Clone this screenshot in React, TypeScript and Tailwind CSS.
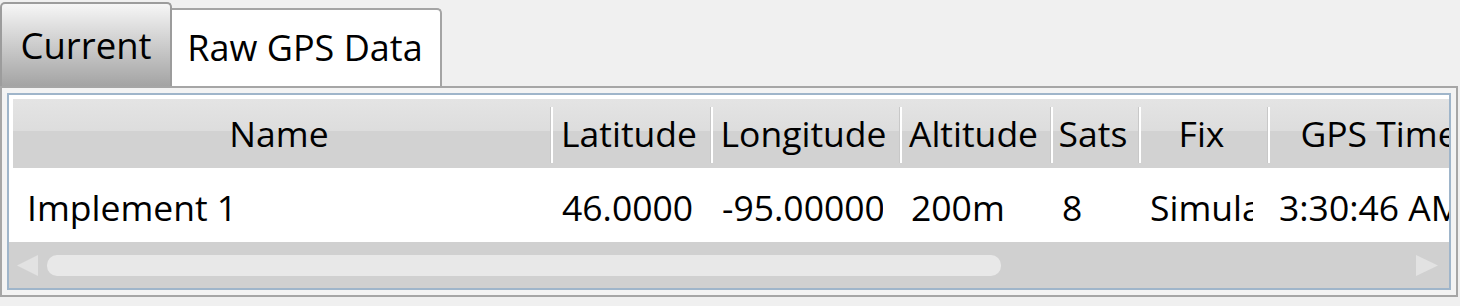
import React from 'react';

const columns = [
  { key: 'name', title: 'Name', width: 538, first: true, pr: 15 },
  { key: 'lat', title: 'Latitude', width: 160, pr: 15 },
  { key: 'lon', title: 'Longitude', width: 189, pr: 17 },
  { key: 'alt', title: 'Altitude', width: 151, pr: 15 },
  { key: 'sats', title: 'Sats', width: 88, pr: 15 },
  { key: 'fix', title: 'Fix', width: 129, pr: 15 },
  { key: 'time', title: 'GPS Time', width: 226, pr: 15 },
];

const row: Record<string, string> = {
  name: 'Implement 1',
  lat: '46.0000',
  lon: '-95.000000',
  alt: '200m',
  sats: '8',
  fix: 'Simulated',
  time: '3:30:46 AM',
};

const App: React.FC = () => {
  return (
    <div className="w-[1460px] h-[306px] overflow-hidden bg-[#f0f0f0] pt-[2px] font-['Open_Sans',sans-serif] text-[35.5px] leading-none text-black">
      {/* tabs */}
      <div className="flex items-end h-[84px]">
        <div className="w-[172px] h-[84px] flex items-center justify-center rounded-t-[5px] border-2 border-b-0 border-[#9c9c9c] bg-gradient-to-b from-[#f6f6f6] to-[#a4a4a4] text-[36.5px]">
          Current
        </div>
        <div className="w-[270px] h-[78px] flex items-center justify-center rounded-tr-[5px] border-2 border-l-0 border-b-0 border-[#a4a4a4] bg-white pr-[2px] text-[36px]">
          Raw GPS Data
        </div>
      </div>

      {/* tab content */}
      <div className="w-[1458px] h-[211px] border-2 border-[#a6a6a6] bg-[#f3f3f3] p-[5px]">
        <div className="h-full border-2 border-[#9fb5ca] bg-white pt-[4px] flex flex-col overflow-hidden">
          {/* header */}
          <div className="flex h-[69px] ml-[4px] shrink-0 bg-[linear-gradient(to_bottom,#e4e4e4_0%,#dddddd_46%,#d2d2d2_46%,#d2d2d2_100%)]">
            {columns.map((c) => (
              <div key={c.key} className="flex shrink-0 h-full" style={{ width: c.width }}>
                {!c.first && <div className="w-[2px] mt-[8px] mb-[5px] bg-white shadow-[-1px_0_0_#c8c8c8]" />}
                <div className="flex-1 flex items-center justify-center pr-[6px] overflow-hidden whitespace-nowrap leading-[1.4]">
                  {c.title}
                </div>
              </div>
            ))}
          </div>

          {/* data row */}
          <div className="flex h-[74px] ml-[4px] shrink-0 bg-white">
            {columns.map((c) => (
              <div
                key={c.key}
                className={`flex items-center shrink-0 h-full pt-[6px] ${c.first ? 'pl-[14px]' : 'pl-[11px]'}`}
                style={{ width: c.width, paddingRight: c.pr }}
              >
                <div className="overflow-hidden whitespace-nowrap w-full leading-[1.4]">{row[c.key]}</div>
              </div>
            ))}
          </div>

          {/* horizontal scrollbar */}
          <div className="flex items-center h-[47px] shrink-0 bg-[#d0d0d0] pl-[8px] pr-[11px]">
            <svg width="21" height="21" viewBox="0 0 21 21" className="shrink-0">
              <path d="M0 10.5 L21 0 L21 21 Z" fill="#e2e2e2" />
            </svg>
            <div className="ml-[9px] w-[954px] h-[21px] rounded-[10px] bg-[#e8e8e8] shrink-0" />
            <div className="flex-1" />
            <svg width="22" height="21" viewBox="0 0 22 21" className="shrink-0">
              <path d="M22 10.5 L0 0 L0 21 Z" fill="#e2e2e2" />
            </svg>
          </div>
        </div>
      </div>
    </div>
  );
};

export default App;
